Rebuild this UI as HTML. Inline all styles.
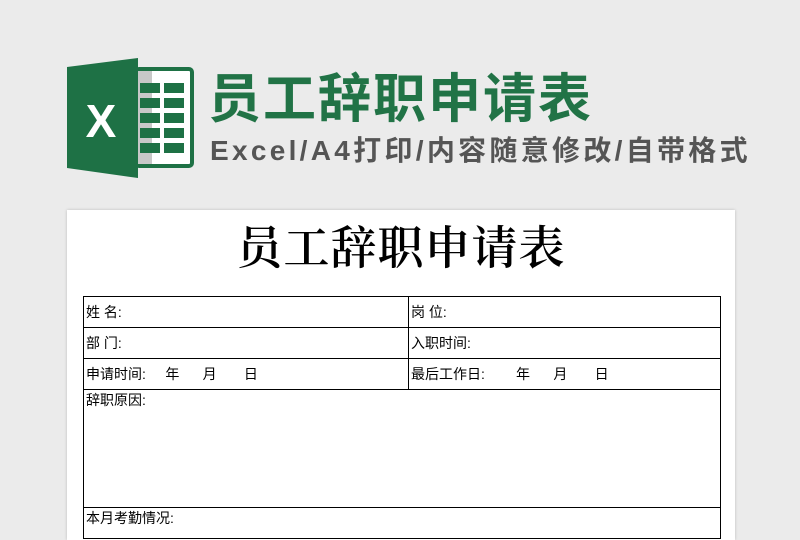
<!DOCTYPE html>
<html><head><meta charset="utf-8"><style>
body{margin:0;width:800px;height:526px;background:#ebebeb;position:relative;overflow:hidden;font-family:"Liberation Sans","Noto Sans CJK SC",sans-serif}
.abs{position:absolute}
.t1{left:208px;top:68px;font-size:53px;font-weight:bold;color:#217346;letter-spacing:2px;white-space:nowrap;line-height:64px}
.t2{left:210px;top:133px;font-size:28px;color:#555;white-space:nowrap;line-height:36px;font-weight:bold;letter-spacing:3.3px}
.paper{left:67px;top:210px;width:668px;height:330px;background:#fff;box-shadow:0 0 3px rgba(0,0,0,.2)}
.pt{left:0;width:668px;top:12px;text-align:center;font-family:"Liberation Serif","Noto Serif CJK SC",serif;font-size:46px;font-weight:600;color:#000;line-height:54px;letter-spacing:1px}
table{position:absolute;left:16px;top:86px;width:638px;border-collapse:collapse;font-size:14px}
td{border:1.5px solid #000;height:30px;padding:0 0 0 2px;vertical-align:middle;white-space:pre}
</style></head><body>
<svg class="abs" style="left:60px;top:55px" width="140" height="130">
<rect x="76" y="14" width="56" height="97" rx="3" fill="#fff" stroke="#1e7145" stroke-width="4"/>
<rect x="78" y="16" width="14" height="93" fill="#c8c8c8"/>
<g fill="#1e7145">
<rect x="80" y="28" width="20" height="10"/><rect x="104" y="28" width="20" height="10"/>
<rect x="80" y="43" width="20" height="10"/><rect x="104" y="43" width="20" height="10"/>
<rect x="80" y="58" width="20" height="10"/><rect x="104" y="58" width="20" height="10"/>
<rect x="80" y="73" width="20" height="10"/><rect x="104" y="73" width="20" height="10"/>
<rect x="80" y="88" width="20" height="10"/><rect x="104" y="88" width="20" height="10"/>
</g>
<polygon points="7,12 78,3 78,123 7,113" fill="#1e7145"/>
<text x="41" y="82" font-family="Liberation Sans" font-weight="bold" font-size="46" fill="#fff" text-anchor="middle">X</text>
</svg>
<div class="abs t1">员工辞职申请表</div>
<div class="abs t2">Excel/A4打印/内容随意修改/自带格式</div>
<div class="abs paper">
<div class="abs pt">员工辞职申请表</div>
<table>
<tr><td style="width:322px">姓 名:</td><td>岗 位:</td></tr>
<tr><td>部 门:</td><td>入职时间:</td></tr>
<tr><td>申请时间:     年      月       日</td><td>最后工作日:        年      月       日</td></tr>
<tr><td colspan="2" style="height:117px;vertical-align:top">辞职原因:</td></tr>
<tr><td colspan="2" style="vertical-align:top">本月考勤情况:</td></tr>
</table>
</div>
</body></html>
